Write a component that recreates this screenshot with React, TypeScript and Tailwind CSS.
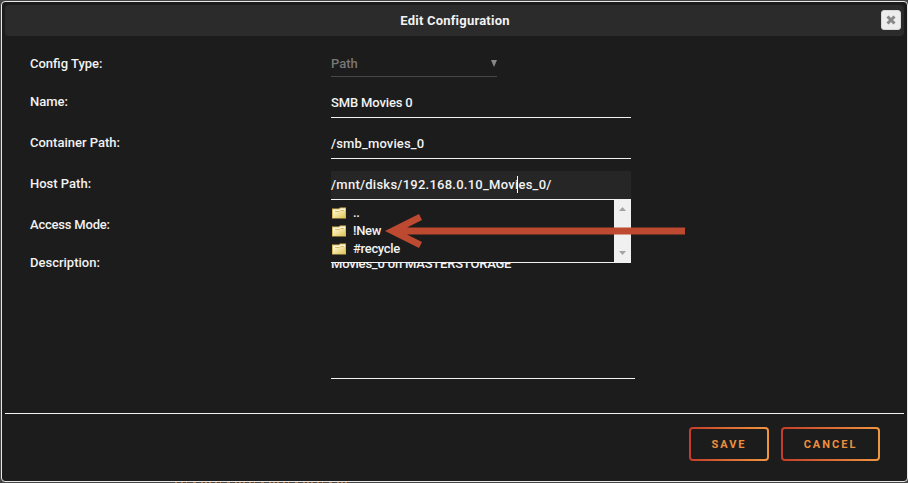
import { ReactNode } from 'react';

interface RowProps {
    label: string;
    className: string;
    children?: ReactNode;
}

function Row({ label, className, children }: RowProps) {
    return (
        <div className={`flex ${className}`}>
            <div className="w-[301px] shrink-0 pt-[6px] leading-[18px]">{label}</div>
            {children}
        </div>
    );
}

function Folder() {
    return (
        <svg width="16" height="14" viewBox="0 0 16 14" className="shrink-0">
            <defs>
                <linearGradient id="folder" x1="0" y1="0" x2="1" y2="1">
                    <stop offset="0" stopColor="#fffbe3" />
                    <stop offset="1" stopColor="#e0c44f" />
                </linearGradient>
            </defs>
            <path d="M1 2.5h7l1-1h6v11H1z" fill="#dcb95a" />
            <path d="M2 3.5h6.5l1-1H14v9H2z" fill="#fff9dc" />
            <path d="M2 6h6l1.5-1.5H14V12H2z" fill="url(#folder)" />
            <path d="M4 5.5h4.500L9.500 4.500H13" fill="none" stroke="#d9bc68" />
        </svg>
    );
}

const folders = ['..', '!New', '#recycle'];

function FileTree() {
    return (
        <div className="absolute left-0 top-[29px] z-10 flex h-[63px] w-[300px] border-b border-[#f2f2f2] bg-[#1c1c1c]">
            <ul className="flex-1 pt-1">
                {folders.map((name) => (
                    <li key={name} className="flex h-[18px] items-center gap-[6px] leading-[18px]">
                        <Folder />
                        <span className="tracking-[-0.3px]">{name}</span>
                    </li>
                ))}
            </ul>
            <div className="flex w-[17px] flex-col items-center justify-between bg-[#f0f0f0] pb-[7px] pt-[7px]">
                <svg width="7" height="4" viewBox="0 0 7 4"><path d="M0 4L3.5 0 7 4z" fill="#a3a3a3" /></svg>
                <svg width="7" height="4" viewBox="0 0 7 4"><path d="M0 0L3.5 4 7 0z" fill="#a3a3a3" /></svg>
            </div>
        </div>
    );
}

function GradientButton({ children, className }: { children: ReactNode; className: string }) {
    return (
        <button className={`h-[34px] rounded-[4px] bg-linear-to-r from-[#c53b2a] to-[#ef9640] p-[2px] ${className}`}>
            <span className="flex h-full items-center justify-center rounded-[2px] bg-[#1c1c1c] pt-[2px] text-[11px] font-bold tracking-[2px] text-[#ed8f3f]">
                {children}
            </span>
        </button>
    );
}

export default function App() {
    return (
        <div className="relative h-[483px] w-[908px] overflow-hidden bg-[#454545] pl-px pt-px font-[Roboto,sans-serif] text-[13px] font-medium text-[#f2f2f2]">
            <div className="flex h-[481px] w-[907px] flex-col rounded-[4px] border border-[#e8e8e8] bg-[#1c1c1c] p-[3px]">
                <header className="relative flex h-[31px] shrink-0 items-center justify-center rounded-[4px] bg-[#2b2b2b] font-bold tracking-[0.22px]">
                    <span className="pl-px">Edit Configuration</span>
                    <button className="absolute right-[3px] top-[5px] flex size-5 items-center justify-center rounded-[3px] border border-[#d8d8d8] bg-[#ededed]">
                        <svg width="10" height="10" viewBox="0 0 10 10">
                            <path d="M1.5 1.5l7 7M8.5 1.5l-7 7" stroke="#888" strokeWidth="3" />
                        </svg>
                    </button>
                </header>

                <main className="h-[378px] shrink-0 border-b border-[#f2f2f2] pl-[25px] pt-[13px]">
                    <Row label="Config Type:" className="h-[38px]">
                        <div className="flex h-[28px] w-[166px] items-center justify-between border-b border-[#484848] pt-[2px] text-[#777]">
                            <span>Path</span>
                            <svg width="6" height="7" viewBox="0 0 6 7"><path d="M0 0h6L3 7z" fill="#888" /></svg>
                        </div>
                    </Row>
                    <Row label="Name:" className="h-[41px]">
                        <div className="mt-[2px] h-[29px] w-[300px] border-b border-[#f2f2f2] leading-[28px] tracking-[-0.15px]">SMB Movies 0</div>
                    </Row>
                    <Row label="Container Path:" className="h-[41px]">
                        <div className="mt-[2px] h-[29px] w-[300px] border-b border-[#f2f2f2] leading-[28px] tracking-[0.14px]">/smb_movies_0</div>
                    </Row>
                    <Row label="Host Path:" className="h-[41px]">
                        <div className="relative mt-[2px] h-[29px] w-[300px] border-b border-[#f2f2f2] bg-[#262626] leading-[28px]">
                            <span className="tracking-[0.25px]">/mnt/disks/192.168.0.10_Movies_0/</span>
                            <span className="absolute left-[186px] top-[5px] h-[17px] w-px bg-white" />
                            <FileTree />
                        </div>
                    </Row>
                    <Row label="Access Mode:" className="h-[38px] tracking-[-0.2px]" />
                    <Row label="Description:" className="h-[131px]">
                        <div className="mt-[2px] h-[129px] w-[304px] border-b border-[#f2f2f2] pt-[5px] leading-[18px] tracking-[-0.2px]">
                            Movies_0 on MASTERSTORAGE
                        </div>
                    </Row>
                </main>

                <footer className="flex justify-end gap-3 pr-[24px] pt-[13px]">
                    <GradientButton className="w-[80px]">SAVE</GradientButton>
                    <GradientButton className="w-[99px]">CANCEL</GradientButton>
                </footer>
            </div>

            {/* arrow pointing at the !New share */}
            <svg width="302" height="36" viewBox="0 0 302 36" className="absolute left-[384px] top-[213px] z-20">
                <path d="M1 18L35 1l3 6-15 7.5H301v7H23L38 29l-3 6z" fill="#be4931" />
            </svg>

            {/* tops of the orange link text on the page below the dialog */}
            <svg width="176" height="1" viewBox="0 0 176 1" className="absolute bottom-0 left-[175px]">
                <path d="M0 .5h176" stroke="#b9753f" strokeDasharray="2 4 2 3 1 6 3 5 2 2 2 2" />
            </svg>
        </div>
    );
}
